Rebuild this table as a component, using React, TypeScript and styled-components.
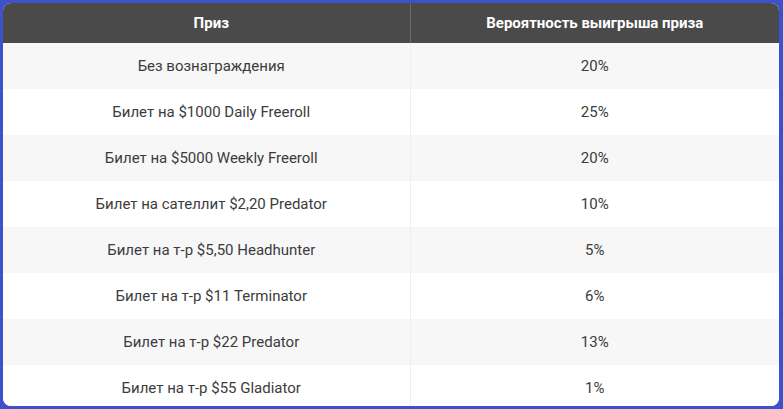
import React from "react";
import styled, { createGlobalStyle } from "styled-components";

const GlobalStyle = createGlobalStyle`
  html, body {
    margin: 0;
    padding: 0;
    background: #3f51c9;
  }
  * {
    box-sizing: border-box;
  }
`;

const Frame = styled.div`
  width: 783px;
  height: 409px;
  padding: 3px 4px 3px 3px;
  background: #3f51c9;
`;

const Card = styled.div`
  height: 100%;
  border-radius: 8px;
  overflow: hidden;
  background: #fff;
`;

const Table = styled.table`
  width: 100%;
  border-collapse: collapse;
  table-layout: fixed;
  font-family: Roboto, "Liberation Sans", sans-serif;
  font-size: 15px;
`;

const HeadCell = styled.th`
  height: 40px;
  padding: 0 8px 0 18px;
  background: #4a4a4a;
  color: #fff;
  font-weight: 700;
  text-align: center;
  & + & {
    padding: 0 8px;
    border-left: 1px solid #6a6a6a;
  }
`;

const Row = styled.tr<{ $alt: boolean }>`
  background: ${({ $alt }) => ($alt ? "#f7f7f7" : "#ffffff")};
`;

const Cell = styled.td`
  height: 46px;
  padding: 0 8px 0 18px;
  color: #3c3c3c;
  text-align: center;
  & + & {
    padding: 0 8px;
    border-left: 1px solid #efefef;
  }
`;

const prizes = [
  ["Без вознаграждения", "20%"],
  ["Билет на $1000 Daily Freeroll", "25%"],
  ["Билет на $5000 Weekly Freeroll", "20%"],
  ["Билет на сателлит $2,20 Predator", "10%"],
  ["Билет на т-р $5,50 Headhunter", "5%"],
  ["Билет на т-р $11 Terminator", "6%"],
  ["Билет на т-р $22 Predator", "13%"],
  ["Билет на т-р $55 Gladiator", "1%"],
];

export default function App() {
  return (
    <>
      <GlobalStyle />
      <Frame>
        <Card>
          <Table>
            <colgroup>
              <col style={{ width: 407 }} />
              <col />
            </colgroup>
            <thead>
              <tr>
                <HeadCell>Приз</HeadCell>
                <HeadCell>Вероятность выигрыша приза</HeadCell>
              </tr>
            </thead>
            <tbody>
              {prizes.map(([name, chance], i) => (
                <Row key={name} $alt={i % 2 === 0}>
                  <Cell>{name}</Cell>
                  <Cell>{chance}</Cell>
                </Row>
              ))}
            </tbody>
          </Table>
        </Card>
      </Frame>
    </>
  );
}
